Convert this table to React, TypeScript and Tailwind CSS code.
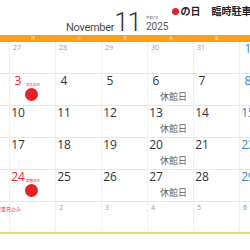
import React from 'react';

type Day = {
  n?: number;
  out?: boolean;
  sat?: boolean;
  red?: boolean;
  note?: string;
  closed?: boolean;
  dot?: boolean;
  memo?: string;
};

const weeks: Day[][] = [
  [{ n: 26, out: true }, { n: 27, out: true }, { n: 28, out: true }, { n: 29, out: true }, { n: 30, out: true }, { n: 31, out: true }, { n: 1, sat: true }],
  [{ n: 2, red: true }, { n: 3, red: true, note: '文化の日', dot: true }, { n: 4 }, { n: 5 }, { n: 6, closed: true }, { n: 7 }, { n: 8, sat: true }],
  [{ n: 9, red: true }, { n: 10 }, { n: 11 }, { n: 12 }, { n: 13, closed: true }, { n: 14 }, { n: 15, sat: true }],
  [{ n: 16, red: true }, { n: 17 }, { n: 18 }, { n: 19 }, { n: 20, closed: true }, { n: 21 }, { n: 22, sat: true }],
  [{ n: 23, red: true }, { n: 24, red: true, note: '振替休日', dot: true }, { n: 25 }, { n: 26 }, { n: 27, closed: true }, { n: 28 }, { n: 29, sat: true }],
  [{ n: 30, red: true, memo: '臨時営業日のみ' }, { out: true }, { n: 2, out: true }, { n: 3, out: true }, { n: 4, out: true }, { n: 5, out: true }, { n: 6, out: true, sat: true }],
];

const labels = ['日', '月', '火', '水', '木', '金', '土'];

const Cell = ({ d }: { d: Day }) => {
  if (d.out) {
    return (
      <div className={`relative h-full border-r border-[#fbf0d8] pl-[3px] pt-[2px] text-[7px] leading-none ${d.sat ? 'text-[#4a8fcc]' : 'text-[#9a9a9a]'}`}>
        {d.n}
      </div>
    );
  }

  const color = d.red ? 'text-[#e8242c]' : d.sat ? 'text-[#3a86c8]' : 'text-[#333]';

  return (
    <div className="relative h-full border-r border-[#fbf0d8] pl-[1px] pt-[1px]">
      <div className="flex items-end">
        <span className={`w-[14px] text-center text-[12px] leading-none ${color}`}>{d.n}</span>
        {d.note && <span className="ml-[1px] mb-[1px] text-[3.5px] leading-none text-[#e8242c]">{d.note}</span>}
      </div>
      {d.closed && <div className="mt-[5px] pl-[11px] text-[9px] leading-none text-[#666]">休館日</div>}
      {d.dot && <div className="ml-[14px] mt-[1px] h-[13px] w-[13px] rounded-full bg-[#e8202a]" />}
      {d.memo && (
        <span className="absolute right-[-12px] top-[5px] whitespace-nowrap text-[5px] leading-none text-[#e8242c]">{d.memo}</span>
      )}
    </div>
  );
};

const App = () => {
  return (
    <div className="relative h-[250px] w-[250px] overflow-hidden bg-white font-['Open_Sans','Noto_Sans_CJK_JP',sans-serif]">
      {/* header */}
      <div className="flex h-[35px] pl-[66px]">
        <div className="flex items-end self-end pb-[3px]">
          <span className="mb-[-1px] font-['Roboto',sans-serif] text-[11px] leading-none tracking-[-0.3px] text-[#4a4a4a]">November</span>
          <span className="ml-[0px] mb-[-3px] font-['Roboto',sans-serif] text-[26px] font-light leading-none tracking-[-1px] text-[#333]">11</span>
          <div className="ml-[5px] flex flex-col">
            <span className="text-[3.5px] leading-none text-[#666]">令和7年</span>
            <span className="mt-[3px] font-['Roboto',sans-serif] text-[10px] leading-none text-[#555]">2025</span>
          </div>
        </div>
        <div className="ml-[4px] mt-[6px] flex items-center self-start whitespace-nowrap text-[10px] font-bold leading-none text-[#222]">
          <span className="h-[7px] w-[7px] rounded-full bg-[#e8202a]" />
          <span className="ml-[1px]">の日</span>
          <span className="ml-[11px]">臨時駐車場</span>
        </div>
      </div>

      {/* calendar */}
      <div className="ml-[-36px] w-[322px]">
        <div className="grid h-[7px] grid-cols-7 bg-[#f7a11b]">
          {labels.map((l) => (
            <div key={l} className="flex items-center justify-center text-[4px] leading-none text-white">{l}</div>
          ))}
        </div>
        {weeks.map((w, i) => (
          <div
            key={i}
            className={`grid h-[32px] grid-cols-7 ${i === weeks.length - 1 ? 'border-b-2 border-[#efcf8c]' : 'border-b border-[#f6e6c4]'}`}
          >
            {w.map((d, j) => (
              <Cell key={j} d={d} />
            ))}
          </div>
        ))}
      </div>
    </div>
  );
};

export default App;
